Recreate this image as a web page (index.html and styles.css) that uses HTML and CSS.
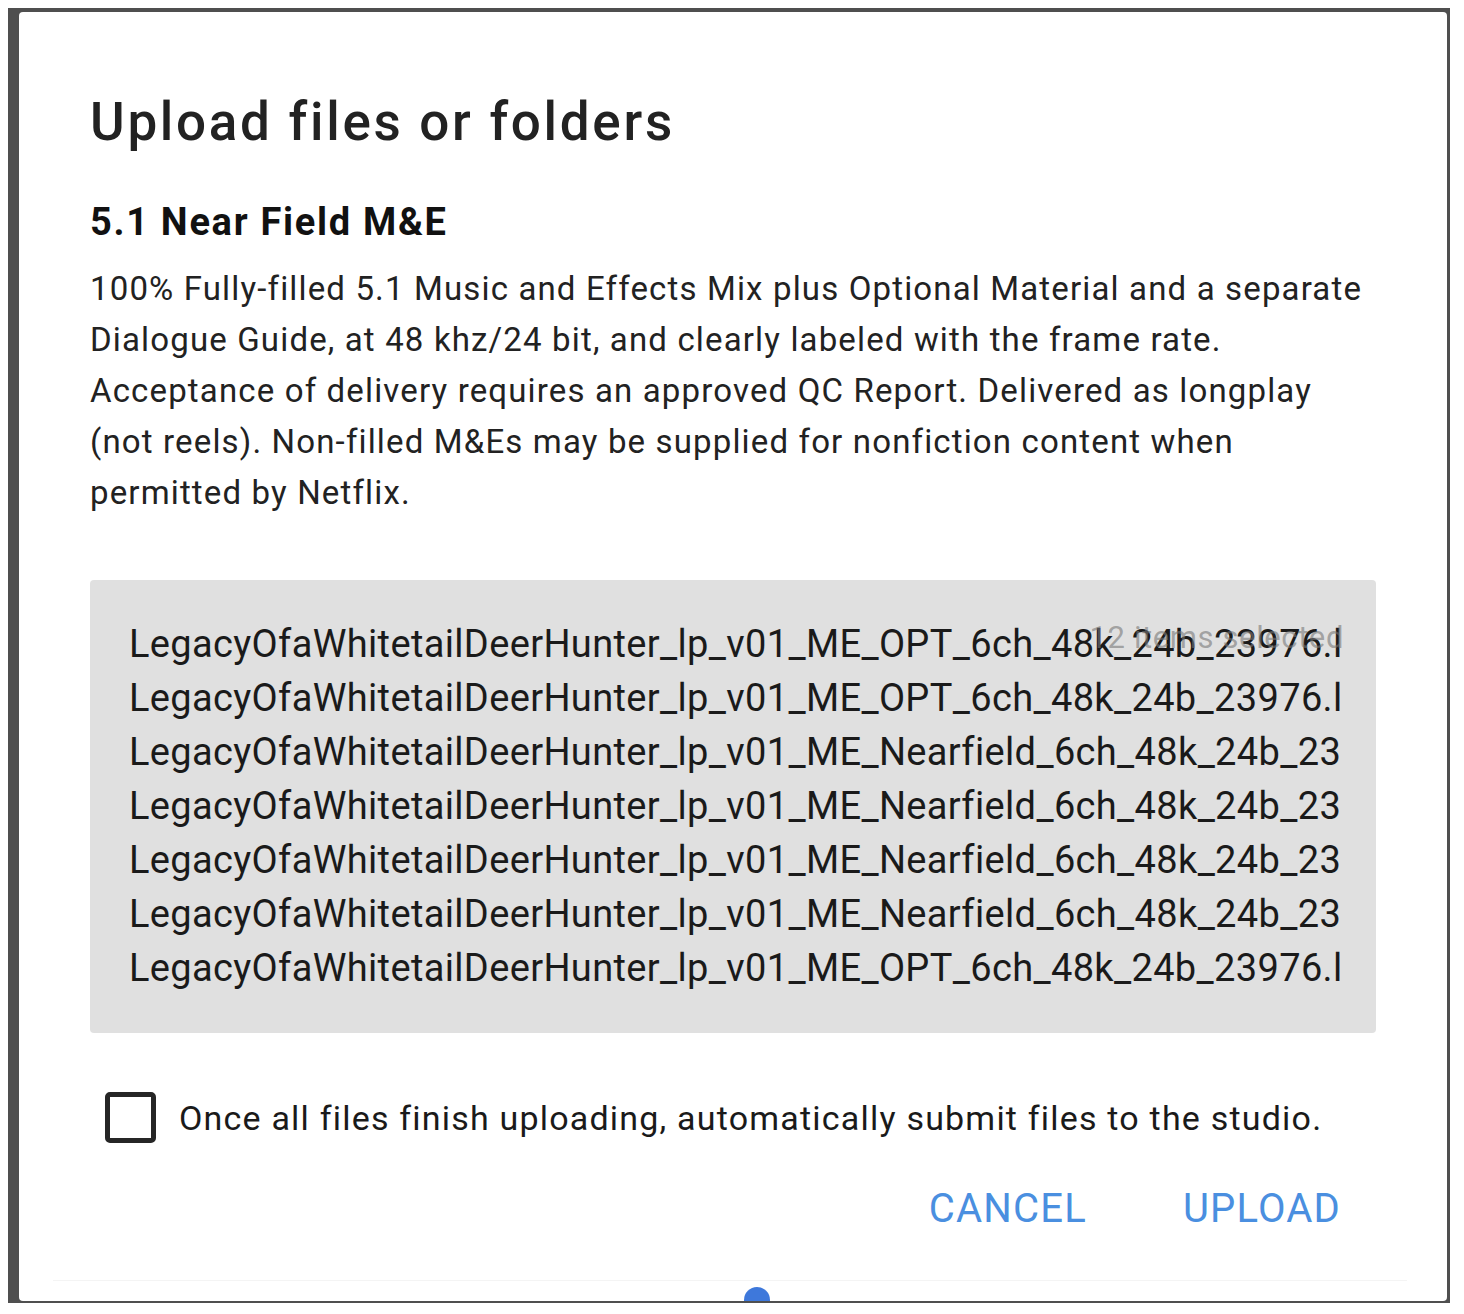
FILE: index.html
```html
<!DOCTYPE html>
<html lang="en">
<head>
<meta charset="utf-8">
<title>Upload files or folders</title>
<link rel="stylesheet" href="styles.css">
</head>
<body>
<div class="backdrop">
  <div class="dialog">
    <h1 class="title">Upload files or folders</h1>
    <h2 class="subtitle">5.1 Near Field M&amp;E</h2>
    <p class="desc">100% Fully-filled 5.1 Music and Effects Mix plus Optional Material and a separate Dialogue Guide, at 48 khz/24 bit, and clearly labeled with the frame rate. Acceptance of delivery requires an approved QC Report. Delivered as longplay (not reels). Non-filled M&amp;Es may be supplied for nonfiction content when permitted by Netflix.</p>
    <div class="files">
      <div class="file">LegacyOfaWhitetailDeerHunter_lp_v01_ME_OPT_6ch_48k_24b_23976.l</div>
      <div class="file">LegacyOfaWhitetailDeerHunter_lp_v01_ME_OPT_6ch_48k_24b_23976.l</div>
      <div class="file">LegacyOfaWhitetailDeerHunter_lp_v01_ME_Nearfield_6ch_48k_24b_23</div>
      <div class="file">LegacyOfaWhitetailDeerHunter_lp_v01_ME_Nearfield_6ch_48k_24b_23</div>
      <div class="file">LegacyOfaWhitetailDeerHunter_lp_v01_ME_Nearfield_6ch_48k_24b_23</div>
      <div class="file">LegacyOfaWhitetailDeerHunter_lp_v01_ME_Nearfield_6ch_48k_24b_23</div>
      <div class="file">LegacyOfaWhitetailDeerHunter_lp_v01_ME_OPT_6ch_48k_24b_23976.l</div>
      <div class="count">12 items selected</div>
    </div>
    <label class="check-row">
      <span class="checkbox"></span>
      <span class="check-label">Once all files finish uploading, automatically submit files to the studio.</span>
    </label>
    <div class="actions">
      <button class="btn">CANCEL</button>
      <button class="btn">UPLOAD</button>
    </div>
    <div class="footer-line"></div>
    <span class="dot"></span>
  </div>
</div>
</body>
</html>
```

FILE: styles.css
```css
html, body {
  margin: 0;
  padding: 0;
  background: #ffffff;
}

body {
  padding: 8px 14px 0 8px;
  font-family: Roboto, "Noto Sans", "Liberation Sans", sans-serif;
}

.backdrop {
  width: 1442px;
  height: 1295px;
  box-sizing: border-box;
  background: #4f4f4f;
  padding: 4px 3px 2px 11px;
}

.dialog {
  position: relative;
  height: 1289px;
  box-sizing: border-box;
  background: #ffffff;
  border-radius: 4px;
  overflow: hidden;
  padding: 80px 71px 0 71px;
  color: #222222;
}

.title {
  margin: 0;
  font-size: 53px;
  line-height: 60px;
  font-weight: 500;
  letter-spacing: 2.7px;
  color: #222222;
}

.subtitle {
  margin: 47px 0 0 0;
  font-size: 38px;
  line-height: 46px;
  font-weight: 700;
  letter-spacing: 1.7px;
  color: #111111;
}

.desc {
  margin: 18px 0 0 0;
  font-size: 33px;
  line-height: 51px;
  letter-spacing: 1.15px;
  color: #222222;
}

.files {
  position: relative;
  margin-top: 62px;
  background: #e0e0e0;
  border-radius: 4px;
  padding: 37px 36px 38px 39px;
  height: 453px;
  box-sizing: border-box;
  overflow: hidden;
}

.file {
  font-size: 38px;
  line-height: 54px;
  letter-spacing: 0.35px;
  color: #1a1a1a;
  white-space: nowrap;
  overflow: hidden;
}

.count {
  position: absolute;
  top: 38px;
  right: 32px;
  font-size: 31px;
  line-height: 40px;
  letter-spacing: 0.6px;
  color: rgba(120, 120, 120, 0.6);
  white-space: nowrap;
}

.check-row {
  display: flex;
  align-items: center;
  gap: 23px;
  margin-top: 59px;
  margin-left: 15px;
}

.checkbox {
  width: 51px;
  height: 51px;
  box-sizing: border-box;
  border: 5px solid #262626;
  border-radius: 5px;
  flex: none;
}

.check-label {
  font-size: 34px;
  line-height: 44px;
  letter-spacing: 1.2px;
  color: #1a1a1a;
}

.actions {
  display: flex;
  justify-content: flex-end;
  gap: 96px;
  margin-top: 42px;
  padding-right: 35px;
}

.btn {
  font-family: Roboto, "Noto Sans", "Liberation Sans", sans-serif;
  font-size: 40px;
  line-height: 48px;
  font-weight: 400;
  letter-spacing: 1.2px;
  color: #4a8fe0;
  background: none;
  border: none;
  padding: 0;
}

.footer-line {
  position: absolute;
  left: 34px;
  right: 40px;
  bottom: 20px;
  height: 1px;
  background: #f4f4f4;
}

.dot {
  position: absolute;
  left: 725px;
  bottom: -12px;
  width: 26px;
  height: 26px;
  border-radius: 50%;
  background: #3e78db;
}
```
